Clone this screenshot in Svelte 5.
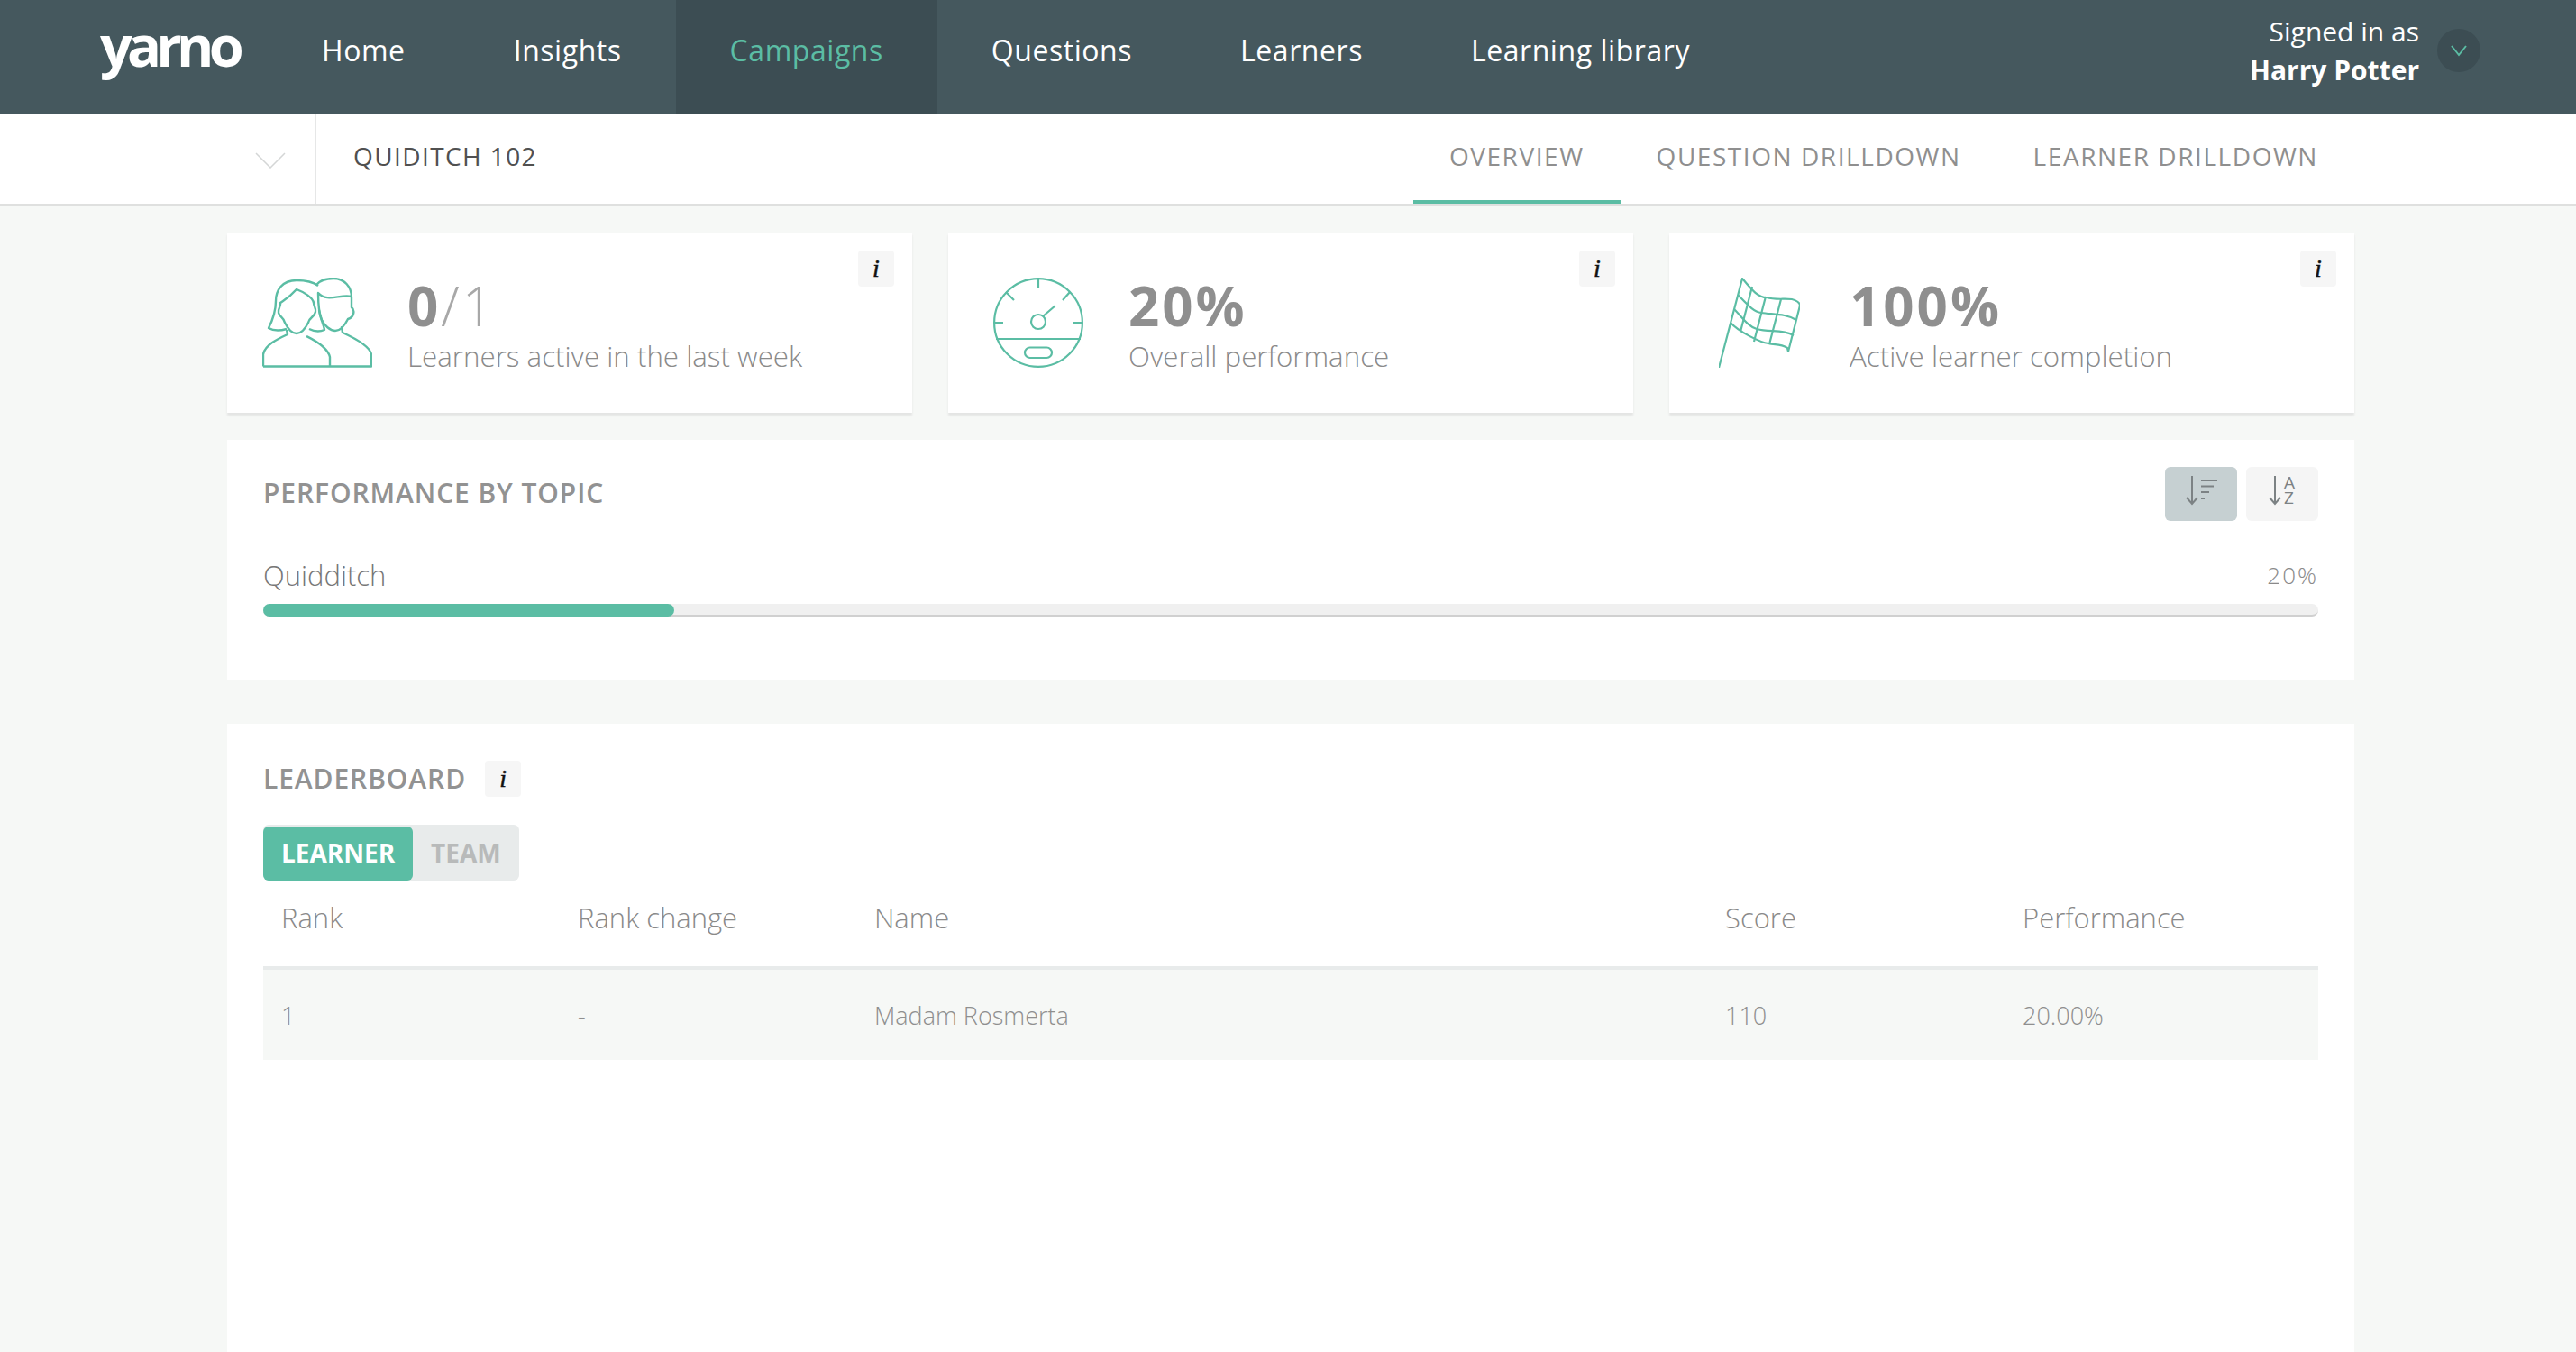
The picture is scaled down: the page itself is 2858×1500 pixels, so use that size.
<script>
	const links = ['Home', 'Insights', 'Campaigns', 'Questions', 'Learners', 'Learning library'];
	const tabs = ['OVERVIEW', 'QUESTION DRILLDOWN', 'LEARNER DRILLDOWN'];
	const columns = ['Rank', 'Rank change', 'Name', 'Score', 'Performance'];
	const rows = [['1', '-', 'Madam Rosmerta', '110', '20.00%']];
</script>

<div class="page">
	<header class="nav">
		<span class="logo">yarno</span>
		<nav class="links">
			{#each links as link}
				<span class="link" class:current={link === 'Campaigns'}>{link}</span>
			{/each}
		</nav>
		<div class="user">
			<div class="user-text">
				<span>Signed in as</span>
				<strong>Harry Potter</strong>
			</div>
			<span class="user-btn">
				<svg width="20" height="14" viewBox="0 0 20 14"><path d="M2 2 L10 12 L18 2" fill="none" stroke="#5bbda4" stroke-width="2" /></svg>
			</span>
		</div>
	</header>

	<div class="subbar">
		<div class="picker">
			<svg width="34" height="18" viewBox="0 0 34 18"><path d="M1 1 L17 17 L33 1" fill="none" stroke="#d4d6d6" stroke-width="1.5" /></svg>
		</div>
		<div class="campaign">QUIDITCH 102</div>
		<div class="tabs">
			{#each tabs as tab, i}
				<span class="tab" class:active={i === 0}>{tab}</span>
			{/each}
		</div>
	</div>

	<main class="content">
		<section class="cards">
			<div class="card">
				<span class="info">i</span>
				<div class="card-icon">
					<svg width="122" height="100" viewBox="0 0 122 100" fill="none" stroke="#5bbda4" stroke-width="2.4" stroke-linejoin="round">
						<path d="M1 98.5 H121 V85 C119 75 100 66 89 61 L88 54" />
						<path d="M1 98.5 V85 C3 75 15 69 28 63 L27 58" />
						<path d="M49 65 C55 68 72 76 75 88 V98.5" />
						<path d="M62 9 C54 3 44 3 38 3 C22 3 15 14 15 26 C15 40 10 50 7 56 C12 59 20 59 27 57" />
						<path d="M52 57 C58 60 64 60 69 58 C68 52 64 44 63 36" />
						<path d="M38 13 C30 22 24 25 20 28 C21 32 17 34 18 39 C19 44 24 44 25 50 C28 56 33 62 38 62 C43 62 48 56 51 50 C52 44 58 44 59 38 C60 34 57 32 57 28 C56 22 46 16 38 13 Z" />
						<path d="M60 8 C64 3 72 1 79 1 C91 1 99 10 99 22 V33 C103 36 102 44 95 46 C92 52 87 59 81 59 C75 59 69 53 66 47 C63 40 62 28 62 17 C72 28 86 18 99 21" />
					</svg>
				</div>
				<div class="card-text">
					<div class="num"><b>0</b><span class="of">/1</span></div>
					<div class="label">Learners active in the last week</div>
				</div>
			</div>
			<div class="card">
				<span class="info">i</span>
				<div class="card-icon">
					<svg width="100" height="100" viewBox="0 0 100 100" fill="none" stroke="#5bbda4" stroke-width="2.2">
						<circle cx="50" cy="50" r="48.9" />
						<path d="M3 68 H97 M50 1 V12 M1 50 H11 M89 50 H99 M14 16 L23 25 M85 16 L77 25 M55 43 L69 31" />
						<circle cx="50" cy="49" r="8" />
						<rect x="35" y="77.5" width="30" height="11.5" rx="5.7" />
					</svg>
				</div>
				<div class="card-text">
					<div class="num"><b>20%</b></div>
					<div class="label">Overall performance</div>
				</div>
			</div>
			<div class="card">
				<span class="info">i</span>
				<div class="card-icon">
					<svg width="90" height="100" viewBox="0 0 90 100" fill="none" stroke="#5bbda4" stroke-width="2.2" stroke-linejoin="round">
						<path d="M0 100 L26 1 C34 10 42 22 53 22 C62 25 72 23 81 24 C86 25 90 28 90 31 L77 82 L76 78 C68 73 62 75 55 73 C46 72 22 60 13 50" />
						<path d="M21 19 C30 28 38 38 47 39 C60 41 75 40 86 47" />
						<path d="M17 35 C26 44 32 54 42 57 C56 61 70 57 83 64" />
						<path d="M37 10 L24 60 M52 21 L39 71 M69 24 L56 74" />
					</svg>
				</div>
				<div class="card-text">
					<div class="num"><b>100%</b></div>
					<div class="label">Active learner completion</div>
				</div>
			</div>
		</section>

		<section class="panel topics">
			<div class="panel-head">
				<h2>PERFORMANCE BY TOPIC</h2>
				<div class="sorts">
					<span class="sort on">
						<svg width="80" height="60" viewBox="0 0 80 60" fill="none" stroke="#7c8284" stroke-width="2">
							<path d="M30 10 V41 M24 34 L30 41 L36 34 M40 15 H58 M40 21.5 H54 M40 28 H49 M40 35 H44" />
						</svg>
					</span>
					<span class="sort alpha">
						<svg width="20" height="60" viewBox="0 0 20 60" fill="none" stroke="#7c8284" stroke-width="2">
							<path d="M10 10 V41 M4 34 L10 41 L16 34" />
						</svg>
						<span class="az"><span>A</span><span>Z</span></span>
					</span>
				</div>
			</div>
			<div class="topic">
				<div class="topic-row">
					<span class="topic-name">Quidditch</span>
					<span class="topic-pct">20%</span>
				</div>
				<div class="track"><div class="fill" style="width: 20%"></div></div>
			</div>
		</section>

		<section class="panel board">
			<div class="board-head">
				<h2>LEADERBOARD</h2>
				<span class="info inline">i</span>
			</div>
			<div class="toggle">
				<span class="opt sel">LEARNER</span>
				<span class="opt">TEAM</span>
			</div>
			<table>
				<colgroup>
					<col style="width: 329px" />
					<col style="width: 329px" />
					<col style="width: 944px" />
					<col style="width: 330px" />
					<col />
				</colgroup>
				<thead>
					<tr>
						{#each columns as c}
							<th>{c}</th>
						{/each}
					</tr>
				</thead>
				<tbody>
					{#each rows as row}
						<tr>
							{#each row as cell}
								<td>{cell}</td>
							{/each}
						</tr>
					{/each}
				</tbody>
			</table>
		</section>
	</main>
</div>

<style>
	:global(body) {
		margin: 0;
		background: #f6f8f6;
	}

	.page {
		height: 1500px;
		overflow: hidden;
		display: flex;
		flex-direction: column;
		font-family: 'Open Sans', 'Noto Sans', sans-serif;
		color: #8f8f8f;
		background: #f6f8f6;
	}

	.nav {
		height: 126px;
		flex: none;
		display: flex;
		align-items: stretch;
		background: #45585e;
		color: #fff;
		padding-left: 111px;
		box-sizing: border-box;
	}

	.logo {
		width: 156px;
		margin-right: 30px;
		font-size: 63px;
		font-weight: 700;
		letter-spacing: -5.8px;
		line-height: 100px;
	}

	.links {
		display: flex;
	}

	.link {
		padding: 0 60px;
		font-size: 32px;
		font-weight: 500;
		letter-spacing: 0.55px;
		line-height: 112px;
	}

	.link.current {
		background: #3c4d53;
		color: #5bbda4;
	}

	.user {
		margin-left: auto;
		padding-right: 106px;
		padding-bottom: 14px;
		display: flex;
		align-items: center;
		gap: 20px;
	}

	.user-text {
		display: flex;
		flex-direction: column;
		align-items: flex-end;
		font-size: 30px;
		line-height: 43px;
		font-weight: 400;
	}

	.user-text strong {
		font-weight: 700;
	}

	.user-btn {
		width: 48px;
		height: 48px;
		border-radius: 50%;
		background: #3c4d53;
		display: flex;
		align-items: center;
		justify-content: center;
	}

	.subbar {
		height: 102px;
		flex: none;
		box-sizing: border-box;
		display: flex;
		align-items: stretch;
		background: #fff;
		border-bottom: 2px solid #dfe0df;
	}

	.picker {
		width: 351px;
		box-sizing: border-box;
		border-right: 1px solid #e6e7e7;
		display: flex;
		align-items: center;
		justify-content: flex-end;
		padding-right: 33px;
		padding-top: 4px;
	}

	.campaign {
		padding-left: 41px;
		font-size: 28px;
		font-weight: 500;
		letter-spacing: 1.4px;
		line-height: 94px;
		color: #505050;
	}

	.tabs {
		margin-left: auto;
		padding-right: 246px;
		display: flex;
	}

	.tab {
		padding: 0 40px;
		font-size: 28px;
		font-weight: 500;
		letter-spacing: 1.55px;
		line-height: 94px;
		height: 96px;
		color: #8f8f8f;
	}

	.tab.active {
		border-bottom: 4px solid #5bbda4;
	}

	.content {
		flex: 1;
		display: flex;
		flex-direction: column;
		padding: 30px 246px 0 252px;
		min-height: 0;
	}

	.cards {
		display: grid;
		grid-template-columns: repeat(3, 1fr);
		gap: 40px;
	}

	.card {
		position: relative;
		height: 200px;
		display: flex;
		align-items: center;
		background: #fff;
		box-shadow: 0 3px 2px #e4e5e4;
	}

	.info {
		width: 40px;
		height: 40px;
		border-radius: 4px;
		background: #f6f6f6;
		display: flex;
		align-items: center;
		justify-content: center;
		font-family: 'Liberation Serif', serif;
		font-style: italic;
		font-size: 28px;
		color: #111;
		-webkit-text-stroke: 0.5px #111;
	}

	.card .info {
		position: absolute;
		top: 20px;
		right: 20px;
	}

	.card-icon {
		width: 200px;
		flex: none;
		display: flex;
		justify-content: center;
	}

	.card-icon svg {
		display: block;
	}

	.card-text {
		padding-top: 14px;
	}

	.num {
		font-size: 60px;
		line-height: 60px;
		letter-spacing: 3px;
		color: #8f8f8f;
	}

	.num b {
		font-weight: 700;
	}

	.of {
		font-weight: 300;
		color: #a8a8a8;
	}

	.label {
		font-size: 31.3px;
		line-height: 52px;
		font-weight: 300;
		color: #8a8a8a;
	}

	.panel {
		background: #fff;
		padding: 0 40px;
	}

	.topics {
		margin-top: 30px;
		height: 266px;
		box-sizing: border-box;
		padding-top: 30px;
	}

	.panel-head {
		display: flex;
		justify-content: space-between;
		align-items: center;
		height: 60px;
	}

	h2 {
		margin: 0;
		font-size: 30px;
		font-weight: 600;
		letter-spacing: 0.9px;
		color: #929292;
		line-height: 40px;
	}

	.panel-head h2 {
		margin-bottom: 2px;
	}

	.sorts {
		display: flex;
		gap: 10px;
	}

	.sort {
		width: 80px;
		height: 60px;
		border-radius: 6px;
		background: #f5f5f5;
		display: flex;
		justify-content: center;
		color: #7c8284;
	}

	.sort.on {
		background: #c6d0d2;
	}

	.sort.alpha {
		justify-content: flex-start;
		padding-left: 22px;
		width: 58px;
	}

	.az {
		display: flex;
		flex-direction: column;
		font-size: 19px;
		font-weight: 500;
		line-height: 17px;
		padding-top: 9px;
		width: 16px;
	}

	.topic {
		margin-top: 38px;
	}

	.topic-row {
		display: flex;
		justify-content: space-between;
		align-items: center;
		height: 44px;
	}

	.topic-name {
		font-size: 31px;
		font-weight: 300;
		color: #777;
	}

	.topic-pct {
		font-size: 26px;
		font-weight: 300;
		letter-spacing: 2px;
		color: #8a8a8a;
	}

	.track {
		margin-top: 10px;
		height: 14px;
		background: #f0f0f0;
		border-bottom: 2px solid #d0d0d0;
		box-sizing: border-box;
		border-radius: 7px;
	}

	.fill {
		height: 14px;
		background: #5bbda4;
		border-radius: 7px;
	}

	.board {
		flex: 1;
		margin-top: 49px;
		padding-top: 41px;
	}

	.board-head {
		display: flex;
		align-items: center;
		gap: 21px;
	}

	.toggle {
		margin-top: 31px;
		width: 284px;
		height: 62px;
		display: flex;
		background: #e8ebeb;
		border-radius: 6px;
		font-size: 28px;
		font-weight: 700;
		color: #b8baba;
	}

	.opt {
		padding: 0 20px;
		line-height: 58px;
		align-self: flex-end;
		height: 60px;
	}

	.opt.sel {
		width: 166px;
		box-sizing: border-box;
		background: #5bbda4;
		color: #fff;
		border-radius: 6px;
	}

	table {
		width: 100%;
		table-layout: fixed;
		border-collapse: collapse;
	}

	th {
		text-align: left;
		padding: 0 20px 14px;
		height: 81px;
		font-size: 31px;
		font-weight: 300;
		color: #8a8a8a;
		border-bottom: 4px solid #e8ebeb;
	}

	td {
		padding: 0 20px;
		height: 100px;
		font-size: 27px;
		font-weight: 300;
		color: #8f8f8f;
		background: #f6f8f6;
	}
</style>
